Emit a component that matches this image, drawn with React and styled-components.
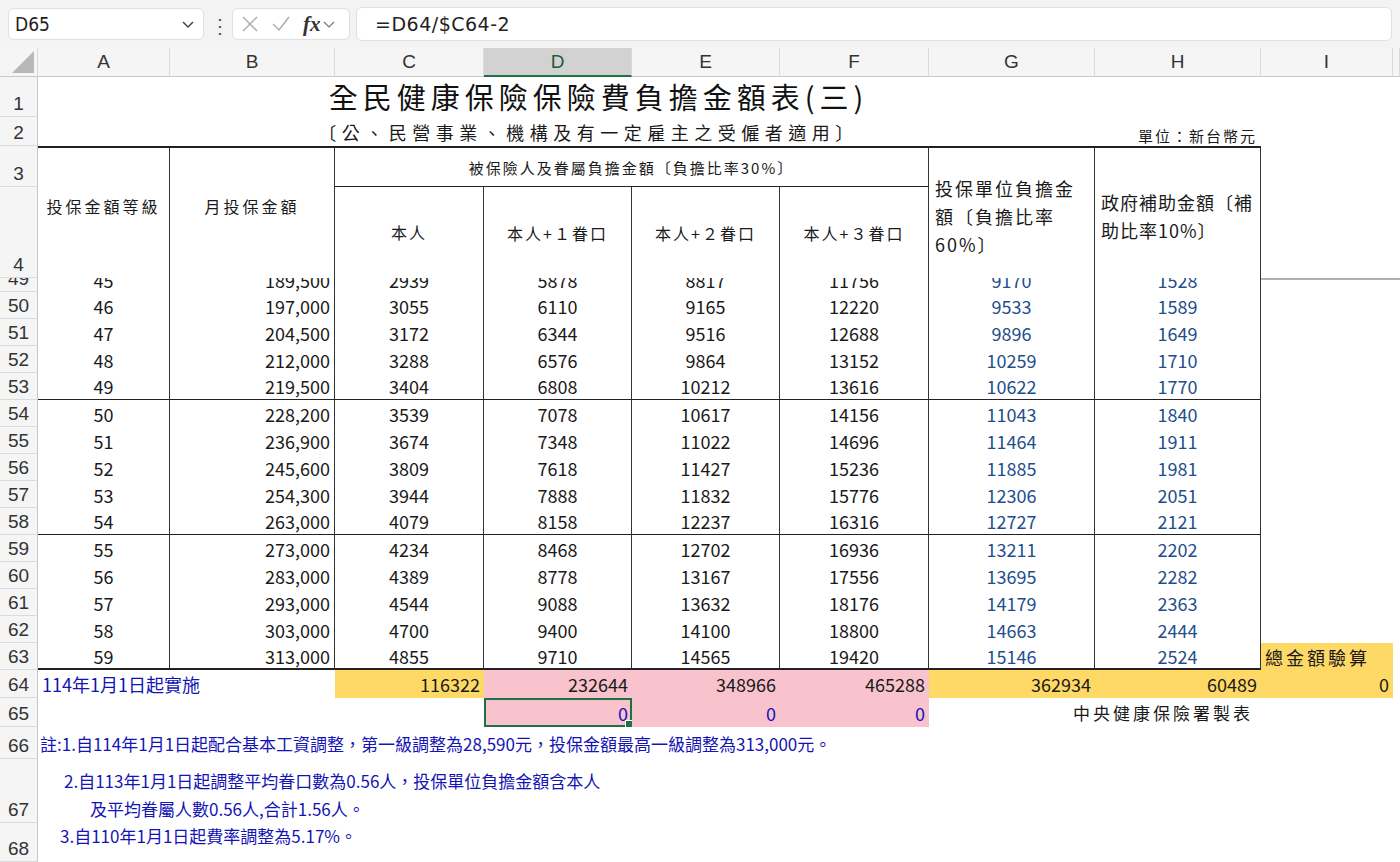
import React from "react";
import styled, { createGlobalStyle, css } from "styled-components";

const G = createGlobalStyle`
  html,body{margin:0;padding:0;background:#fff;overflow:hidden;}
  body{font-family:"Noto Sans CJK TC","Noto Sans",sans-serif;}
`;

const Top = styled.div`
  height:48px;background:#f3f3f3;display:flex;align-items:center;gap:6px;padding:0 8px;box-sizing:border-box;
`;
const NameBox = styled.div`
  width:196px;height:32px;background:#fff;border:1px solid #e0e0e0;border-radius:6px;display:flex;align-items:center;
  justify-content:space-between;padding:0 8px 0 6px;box-sizing:border-box;font-size:19px;color:#222;font-family:"Liberation Sans Narrow","DejaVu Sans Condensed",sans-serif;
`;
const Dots = styled.div`color:#555;font-size:20px;width:16px;text-align:center;`;
const FxBox = styled.div`
  width:118px;height:32px;background:#fff;border:1px solid #e0e0e0;border-radius:6px;display:flex;align-items:center;gap:12px;padding:0 8px;box-sizing:border-box;color:#aaa;
`;
const Fx = styled.span`font-family:"Liberation Serif",serif;font-style:italic;font-weight:bold;font-size:21px;color:#333;`;
const Formula = styled.div`
  flex:1;height:32px;background:#fff;border:1px solid #e0e0e0;border-radius:6px;display:flex;align-items:center;padding-left:18px;
  font-size:19px;color:#222;font-family:"DejaVu Sans","Noto Sans",sans-serif;letter-spacing:0.5px;
`;

const Sheet = styled.div`
  display:grid;
  grid-template-columns:38px 132px 165px 149px 148px 148px 149px 166px 166px 132px 7px;
  grid-template-rows:29px 40px 29px 41px 91px 14px repeat(14,27px) 28px 29px 32px 64px 39px;
`;

const ColHead = styled.div`
  background:${p=>p.$sel?"#d2d2d2":"#f5f5f5"};border-right:1px solid #dadada;border-bottom:${p=>p.$sel?"2px solid #1e7145":"1px solid #c8c8c8"};
  display:flex;align-items:center;justify-content:center;font-size:19px;color:${p=>p.$sel?"#1e5c3a":"#333"};
  font-family:"Liberation Sans","Noto Sans",sans-serif;box-sizing:border-box;
`;
const Corner = styled(ColHead)`position:relative;`;
const Tri = styled.div`position:absolute;right:3px;bottom:3px;width:0;height:0;border-left:22px solid transparent;border-bottom:22px solid #b8b8b8;`;
const RowHead = styled.div`
  background:#f5f5f5;border-right:1px solid #c8c8c8;border-bottom:1px solid #dadada;box-sizing:border-box;
  display:flex;align-items:flex-end;justify-content:center;padding-bottom:1px;font-size:19px;color:#333;overflow:hidden;
  font-family:"Liberation Sans","Noto Sans",sans-serif;line-height:22px;
`;

const Cell = styled.div`
  box-sizing:border-box;display:flex;overflow:hidden;white-space:nowrap;
  grid-column:${p=>p.$c};grid-row:${p=>p.$r};
  align-items:${p=>p.$v||"center"};
  justify-content:${p=>p.$h||"center"};
  background:${p=>p.$bg||"transparent"};
  color:${p=>p.$color||"#1a1a1a"};
  font-size:${p=>p.$fs||18}px;
  letter-spacing:${p=>p.$ls||0}px;
  padding:${p=>p.$pad||"0 4px"};
  ${p=>p.$br&&css`border-right:1px solid #333;`}
  ${p=>p.$bb&&css`border-bottom:${p.$bb}px solid #222;`}
  ${p=>p.$bt&&css`border-top:${p.$bt}px solid #222;`}
  ${p=>p.$frz&&css`border-top:2px solid #b0b0b0;line-height:24px;`}
  ${p=>p.$sel&&css`outline:2px solid #1e7145;outline-offset:-2px;`}
  ${p=>p.$wrap&&css`white-space:normal;line-height:28px;`}
  position:relative;
`;
const Handle = styled.div`position:absolute;right:-1px;bottom:-1px;width:6px;height:6px;background:#1e7145;border:1px solid #fff;`;

const data = [
  [45,"189,500",2939,5878,8817,11756,9170,1528],
  [46,"197,000",3055,6110,9165,12220,9533,1589],
  [47,"204,500",3172,6344,9516,12688,9896,1649],
  [48,"212,000",3288,6576,9864,13152,10259,1710],
  [49,"219,500",3404,6808,10212,13616,10622,1770],
  [50,"228,200",3539,7078,10617,14156,11043,1840],
  [51,"236,900",3674,7348,11022,14696,11464,1911],
  [52,"245,600",3809,7618,11427,15236,11885,1981],
  [53,"254,300",3944,7888,11832,15776,12306,2051],
  [54,"263,000",4079,8158,12237,16316,12727,2121],
  [55,"273,000",4234,8468,12702,16936,13211,2202],
  [56,"283,000",4389,8778,13167,17556,13695,2282],
  [57,"293,000",4544,9088,13632,18176,14179,2363],
  [58,"303,000",4700,9400,14100,18800,14663,2444],
  [59,"313,000",4855,9710,14565,19420,15146,2524],
];
const rowLabels=[1,2,3,4,49,50,51,52,53,54,55,56,57,58,59,60,61,62,63,64,65,66,67,68];
const cols=["A","B","C","D","E","F","G","H","I"];
const BLUE="#1f4e8c", NAVY="#1414b4", YEL="#ffd966", PINK="#f8c3cd";

export default function App(){
  const cells=[];
  data.forEach((d,i)=>{
    const r=6+i, isRow49=i===0;
    const bb = (i===4||i===9)?1:(i===14?2:0);
    const common={ $r:r, $bb:bb, $frz:isRow49, $v:isRow49?"flex-end":"center" };
    cells.push(<Cell key={"a"+i} {...common} $c={2} $br>{d[0]}</Cell>);
    cells.push(<Cell key={"b"+i} {...common} $c={3} $br $h="flex-end">{d[1]}</Cell>);
    [2,3,4,5].forEach(k=>cells.push(<Cell key={k+"c"+i} {...common} $c={k+2} $br>{d[k]}</Cell>));
    [6,7].forEach(k=>cells.push(<Cell key={k+"g"+i} {...common} $c={k+2} $br $color={BLUE}>{d[k]}</Cell>));
    if(isRow49) cells.push(<Cell key={"ifz"} $r={r} $c="10 / 12" $frz />);
  });

  return (<>
    <G/>
    <Top>
      <NameBox>D65<svg width="14" height="14" viewBox="0 0 14 14"><path d="M2 5l5 5 5-5" stroke="#444" strokeWidth="1.5" fill="none"/></svg></NameBox>
      <Dots>⋮</Dots>
      <FxBox>
        <svg width="18" height="18" viewBox="0 0 18 18"><path d="M2 2l14 14M16 2L2 16" stroke="#aaa" strokeWidth="1.4"/></svg>
        <svg width="20" height="18" viewBox="0 0 20 18"><path d="M2 9l6 6L18 2" stroke="#aaa" strokeWidth="1.4" fill="none"/></svg>
        <Fx>fx</Fx>
        <svg width="12" height="12" viewBox="0 0 12 12" style={{marginLeft:-10}}><path d="M1 4l5 5 5-5" stroke="#777" strokeWidth="1.2" fill="none"/></svg>
      </FxBox>
      <Formula>=D64/$C64-2</Formula>
    </Top>
    <Sheet>
      <Corner><Tri/></Corner>
      {cols.map(c=><ColHead key={c} $sel={c==="D"}>{c}</ColHead>)}
      <ColHead/>
      {rowLabels.map((l,i)=><RowHead key={l} style={{gridColumn:1,gridRow:i+2}}>{l}</RowHead>)}

      <Cell $c="2 / 8" $r={2} $fs={29} $ls={5} $pad="0 0 0 230px" $color="#111" $v="flex-end">全民健康保險保險費負擔金額表(三)</Cell>
      <Cell $c="2 / 8" $r={3} $fs={18} $ls={5.5} $pad="0 0 0 210px">〔公、民營事業、機構及有一定雇主之受僱者適用〕</Cell>
      <Cell $c={9} $r={3} $h="flex-end" $fs={15} $ls={2} $pad="0 4px 0 0" $v="flex-end">單位：新台幣元</Cell>

      <Cell $c={2} $r="4 / 6" $bt={2} $br $fs={16} $ls={3} $pad="0 0 14px 0">投保金額等級</Cell>
      <Cell $c={3} $r="4 / 6" $bt={2} $br $fs={16} $ls={3} $pad="0 0 14px 0">月投保金額</Cell>
      <Cell $c="4 / 8" $r={4} $bt={2} $bb={1} $br $fs={15} $ls={2}>被保險人及眷屬負擔金額〔負擔比率30%〕</Cell>
      <Cell $c={4} $r={5} $br $fs={16} $ls={2} $pad="0 0 2px 0">本人</Cell>
      <Cell $c={5} $r={5} $br $fs={16} $ls={2}>本人+１眷口</Cell>
      <Cell $c={6} $r={5} $br $fs={16} $ls={2}>本人+２眷口</Cell>
      <Cell $c={7} $r={5} $br $fs={16} $ls={2}>本人+３眷口</Cell>
      <Cell $c={8} $r="4 / 6" $bt={2} $br $fs={18} $ls={2} $wrap $h="flex-start" $v="flex-start" $pad="26px 2px 0 6px">投保單位負擔金額〔負擔比率60%〕</Cell>
      <Cell $c={9} $r="4 / 6" $bt={2} $br $fs={18} $ls={1} $wrap $h="flex-start" $v="flex-start" $pad="40px 0 0 6px">政府補助金額〔補助比率10%〕</Cell>

      {cells}

      <Cell $c={10} $r={20} $bg={YEL} $fs={18} $ls={3} $h="flex-start">總金額驗算</Cell>
      <Cell $c="2 / 4" $r={21} $color={NAVY} $h="flex-start" $fs={18}>114年1月1日起實施</Cell>
      <Cell $c={4} $r={21} $bg={YEL} $h="flex-end">116322</Cell>
      {[232644,348966,465288].map((v,i)=><Cell key={v} $c={5+i} $r={21} $bg={PINK} $h="flex-end">{v}</Cell>)}
      <Cell $c={8} $r={21} $bg={YEL} $h="flex-end">362934</Cell>
      <Cell $c={9} $r={21} $bg={YEL} $h="flex-end">60489</Cell>
      <Cell $c={10} $r={21} $bg={YEL} $h="flex-end">0</Cell>
      <Cell $c={5} $r={22} $bg={PINK} $h="flex-end" $color={NAVY} $sel>0<Handle/></Cell>
      <Cell $c={6} $r={22} $bg={PINK} $h="flex-end" $color={NAVY}>0</Cell>
      <Cell $c={7} $r={22} $bg={PINK} $h="flex-end" $color={NAVY}>0</Cell>
      <Cell $c="8 / 10" $r={22} $fs={17} $ls={3} $h="flex-end" $pad="0 8px 0 0">中央健康保險署製表</Cell>

      <Cell $c="2 / 12" $r={23} $h="flex-start" $color={NAVY} $fs={17} $pad="0 0 0 2px">註:1.自114年1月1日起配合基本工資調整，第一級調整為28,590元，投保金額最高一級調整為313,000元。</Cell>
      <Cell $c="2 / 12" $r={24} $h="flex-start" $color={NAVY} $fs={17} $wrap $v="flex-start" $pad="8px 0 0 26px">
        <div>2.自113年1月1日起調整平均眷口數為0.56人，投保單位負擔金額含本人<br/><span style={{paddingLeft:26}}>及平均眷屬人數0.56人,合計1.56人。</span></div>
      </Cell>
      <Cell $c="2 / 12" $r={25} $h="flex-start" $color={NAVY} $fs={17} $v="flex-start" $pad="0 0 0 22px">3.自110年1月1日起費率調整為5.17%。</Cell>
    </Sheet>
  </>);
}
